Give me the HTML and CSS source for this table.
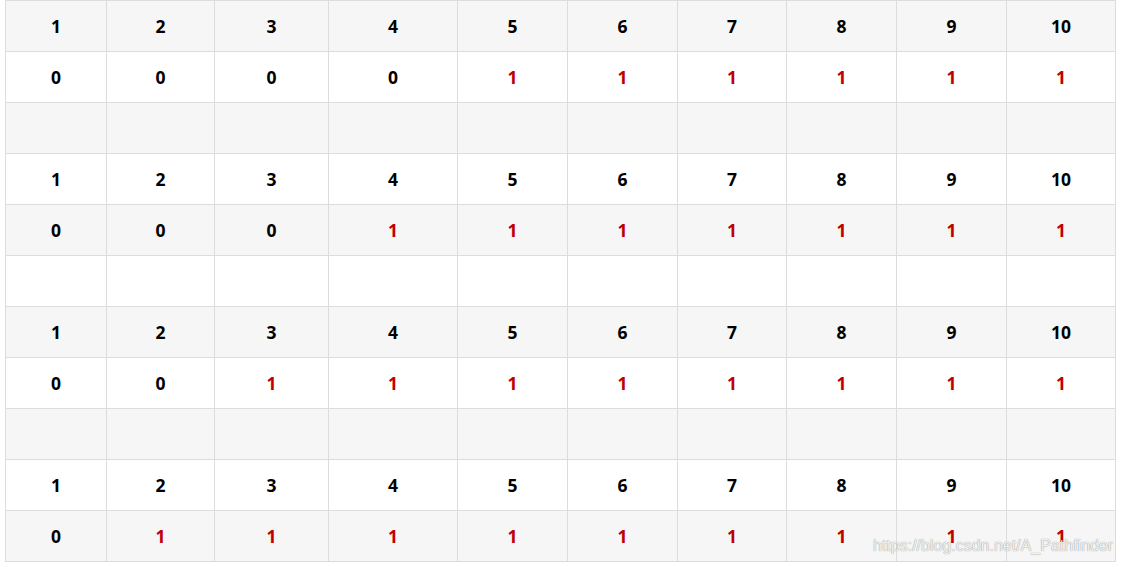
FILE: index.html
```html
<!DOCTYPE html>
<html>
<head>
<meta charset="utf-8">
<link rel="stylesheet" href="styles.css">
</head>
<body>
<div class="page">
  <div class="grid">
    <div class="row odd"><span>1</span><span>2</span><span>3</span><span>4</span><span>5</span><span>6</span><span>7</span><span>8</span><span>9</span><span>10</span></div>
    <div class="row"><span>0</span><span>0</span><span>0</span><span>0</span><span class="on">1</span><span class="on">1</span><span class="on">1</span><span class="on">1</span><span class="on">1</span><span class="on">1</span></div>
    <div class="row odd"><span></span><span></span><span></span><span></span><span></span><span></span><span></span><span></span><span></span><span></span></div>
    <div class="row"><span>1</span><span>2</span><span>3</span><span>4</span><span>5</span><span>6</span><span>7</span><span>8</span><span>9</span><span>10</span></div>
    <div class="row odd"><span>0</span><span>0</span><span>0</span><span class="on">1</span><span class="on">1</span><span class="on">1</span><span class="on">1</span><span class="on">1</span><span class="on">1</span><span class="on">1</span></div>
    <div class="row"><span></span><span></span><span></span><span></span><span></span><span></span><span></span><span></span><span></span><span></span></div>
    <div class="row odd"><span>1</span><span>2</span><span>3</span><span>4</span><span>5</span><span>6</span><span>7</span><span>8</span><span>9</span><span>10</span></div>
    <div class="row"><span>0</span><span>0</span><span class="on">1</span><span class="on">1</span><span class="on">1</span><span class="on">1</span><span class="on">1</span><span class="on">1</span><span class="on">1</span><span class="on">1</span></div>
    <div class="row odd"><span></span><span></span><span></span><span></span><span></span><span></span><span></span><span></span><span></span><span></span></div>
    <div class="row"><span>1</span><span>2</span><span>3</span><span>4</span><span>5</span><span>6</span><span>7</span><span>8</span><span>9</span><span>10</span></div>
    <div class="row odd"><span>0</span><span class="on">1</span><span class="on">1</span><span class="on">1</span><span class="on">1</span><span class="on">1</span><span class="on">1</span><span class="on">1</span><span class="on">1</span><span class="on">1</span></div>
  </div>
  <div class="watermark">https://blog.csdn.net/A_Pathfinder</div>
</div>
</body>
</html>
```
FILE: styles.css
```css
html, body {
  margin: 0;
  padding: 0;
  background: #fff;
}
.page {
  position: relative;
  padding: 0 0 0 5px;
  width: 1111px;
  height: 567px;
}
.grid {
  display: flex;
  flex-direction: column;
  border-left: 1px solid #dcdcdc;
  border-top: 1px solid #dcdcdc;
  width: 1110px;
  font-family: "Noto Sans", "Open Sans", sans-serif;
  font-weight: 700;
  font-size: 17.5px;
  color: #000;
}
.row {
  display: grid;
  grid-template-columns: 101px 108px 114px 129px 110px 110px 109px 110px 110px 109px;
  height: 51px;
  background: #fff;
}
.row.odd {
  background: #f6f6f6;
}
.row span {
  display: flex;
  align-items: center;
  justify-content: center;
  border-right: 1px solid #dcdcdc;
  border-bottom: 1px solid #dcdcdc;
  box-sizing: border-box;
  height: 51px;
}
.row span.on {
  color: #c00000;
}
.watermark {
  position: absolute;
  left: 873px;
  top: 537px;
  font-family: "Liberation Sans", Arial, sans-serif;
  font-size: 16px;
  color: rgba(255, 255, 255, 0.9);
  text-shadow: 0 0 1px rgba(0, 0, 0, 0.4), 0 0 1px rgba(0, 0, 0, 0.2);
  white-space: nowrap;
}
```
